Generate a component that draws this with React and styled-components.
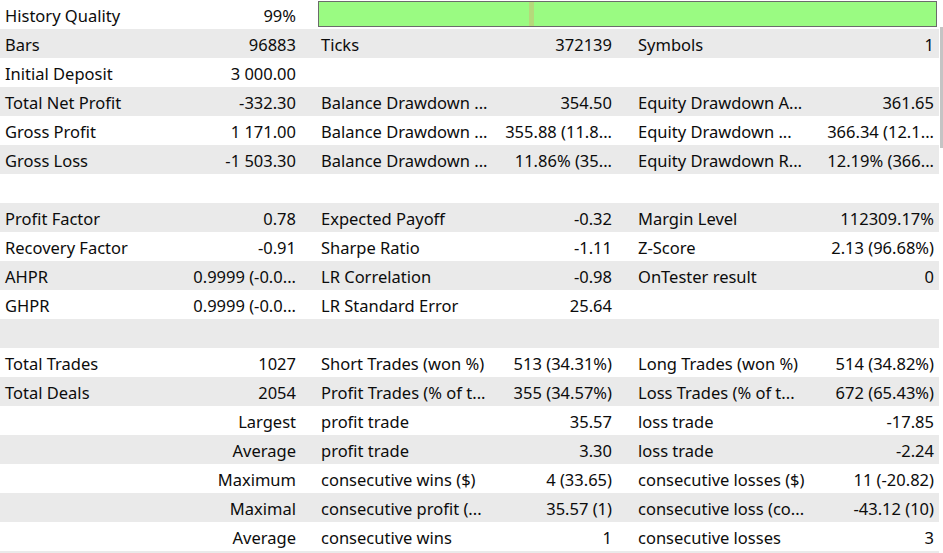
import React from 'react';
import styled, { createGlobalStyle } from 'styled-components';

const GlobalStyle = createGlobalStyle`
    html, body {
        margin: 0;
        padding: 0;
        background: #ffffff;
    }
    body {
        font-family: "Noto Sans", "Open Sans", sans-serif;
        font-size: 16.5px;
        color: #0c0c0c;
    }
`;

const Frame = styled.div`
    display: flex;
    width: 943px;
    height: 553px;
    overflow: hidden;
`;

const Report = styled.div`
    width: 939px;
    flex: none;
`;

const Row = styled.div`
    display: grid;
    grid-template-columns: 181px 120px 15px 181px 120px 16px 180px 126px;
    box-sizing: border-box;
    height: 29px;
    padding-top: 2px;
    line-height: 27px;
    background: ${p => (p.$shaded ? '#eaeaea' : '#ffffff')};
`;

const Label = styled.div`
    padding-left: 5px;
    white-space: nowrap;
    overflow: hidden;
`;

const Value = styled.div`
    padding-right: 5px;
    text-align: right;
    white-space: nowrap;
    overflow: hidden;
`;

const Spacer = styled.div``;

const QualityBar = styled.div`
    grid-column: 4 / 9;
    margin: -1px 2px 2px 2px;
    border: 1px solid #6b6b6b;
    background: #9afb82;
    display: flex;
    padding-left: 210px;
`;

const QualityMark = styled.div`
    width: 5px;
    background: #b5d97b;
`;

const Scroll = styled.div`
    width: 4px;
    flex: none;
    padding-top: 27px;
`;

const Thumb = styled.div`
    height: 121px;
    margin-left: 1px;
    background: #c4c4c4;
`;

const rows = [
    null,
    [['Bars', '96883'], ['Ticks', '372139'], ['Symbols', '1']],
    [['Initial Deposit', '3 000.00'], ['', ''], ['', '']],
    [['Total Net Profit', '-332.30'], ['Balance Drawdown ...', '354.50'], ['Equity Drawdown A...', '361.65']],
    [['Gross Profit', '1 171.00'], ['Balance Drawdown ...', '355.88 (11.8...'], ['Equity Drawdown ...', '366.34 (12.1...']],
    [['Gross Loss', '-1 503.30'], ['Balance Drawdown ...', '11.86% (35...'], ['Equity Drawdown R...', '12.19% (366...']],
    [['', ''], ['', ''], ['', '']],
    [['Profit Factor', '0.78'], ['Expected Payoff', '-0.32'], ['Margin Level', '112309.17%']],
    [['Recovery Factor', '-0.91'], ['Sharpe Ratio', '-1.11'], ['Z-Score', '2.13 (96.68%)']],
    [['AHPR', '0.9999 (-0.0...'], ['LR Correlation', '-0.98'], ['OnTester result', '0']],
    [['GHPR', '0.9999 (-0.0...'], ['LR Standard Error', '25.64'], ['', '']],
    [['', ''], ['', ''], ['', '']],
    [['Total Trades', '1027'], ['Short Trades (won %)', '513 (34.31%)'], ['Long Trades (won %)', '514 (34.82%)']],
    [['Total Deals', '2054'], ['Profit Trades (% of t...', '355 (34.57%)'], ['Loss Trades (% of t...', '672 (65.43%)']],
    [['', 'Largest'], ['profit trade', '35.57'], ['loss trade', '-17.85']],
    [['', 'Average'], ['profit trade', '3.30'], ['loss trade', '-2.24']],
    [['', 'Maximum'], ['consecutive wins ($)', '4 (33.65)'], ['consecutive losses ($)', '11 (-20.82)']],
    [['', 'Maximal'], ['consecutive profit (...', '35.57 (1)'], ['consecutive loss (co...', '-43.12 (10)']],
    [['', 'Average'], ['consecutive wins', '1'], ['consecutive losses', '3']],
    [['', ''], ['', ''], ['', '']],
];

export default function App() {
    return (
        <>
            <GlobalStyle />
            <Frame>
                <Report>
                    {rows.map((cells, i) => (
                        <Row key={i} $shaded={i % 2 === 1}>
                            {cells === null ? (
                                <>
                                    <Label>History Quality</Label>
                                    <Value>99%</Value>
                                    <Spacer />
                                    <QualityBar>
                                        <QualityMark />
                                    </QualityBar>
                                </>
                            ) : (
                                cells.map(([label, value], j) => (
                                    <React.Fragment key={j}>
                                        {j > 0 && <Spacer />}
                                        <Label>{label}</Label>
                                        <Value>{value}</Value>
                                    </React.Fragment>
                                ))
                            )}
                        </Row>
                    ))}
                </Report>
                <Scroll>
                    <Thumb />
                </Scroll>
            </Frame>
        </>
    );
}
